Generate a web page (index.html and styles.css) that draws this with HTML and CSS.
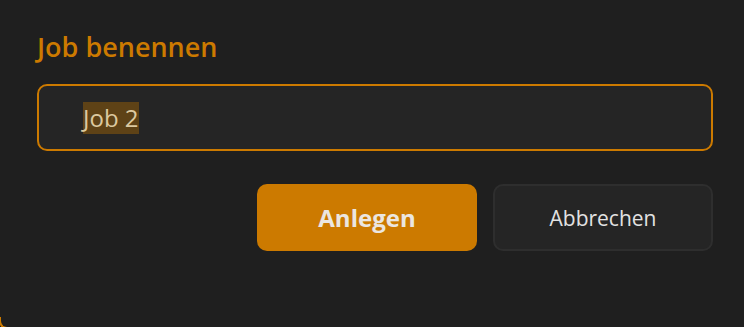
FILE: index.html
```html
<!DOCTYPE html>
<html lang="de">
<head>
    <meta charset="UTF-8">
    <meta name="viewport" content="width=device-width, initial-scale=1.0">
    <title>Job benennen</title>
    <link rel="stylesheet" href="styles.css">
</head>
<body>
    <!-- Rename dialog -->
    <div class="dialog">
        <h1 class="title">Job benennen</h1>
        <div class="field">
            <span class="value">Job 2</span>
        </div>
        <div class="actions">
            <button class="btn primary">Anlegen</button>
            <button class="btn secondary">Abbrechen</button>
        </div>
    </div>
</body>
</html>
```

FILE: styles.css
```css
/* Dark dialog */
body {
    margin: 0;
    background-color: #1f1f1f;
    font-family: "Open Sans", "Noto Sans", sans-serif;
    overflow: hidden;
}

.dialog {
    position: relative;
    height: 327px;
    padding: 29px 31px 0 37px;
    box-sizing: border-box;
}

/* clipped window corner */
.dialog::after {
    content: "";
    position: absolute;
    left: -1px;
    bottom: -2px;
    width: 10px;
    height: 10px;
    border-left: 2px solid #cc7a00;
    border-bottom: 2px solid #cc7a00;
    border-bottom-left-radius: 8px;
}

.title {
    margin: 0;
    font-size: 27px;
    font-weight: 600;
    line-height: 36px;
    color: #cc7a00;
}

.field {
    margin-top: 19px;
    height: 67px;
    box-sizing: border-box;
    border: 2px solid #cc7a00;
    border-radius: 10px;
    background: #252525;
    display: flex;
    align-items: center;
    padding-left: 44px;
}

.value {
    background: #5e4216;
    color: #dcc9a0;
    font-size: 24px;
    line-height: 32px;
}

.actions {
    display: flex;
    justify-content: flex-end;
    gap: 16px;
    margin-top: 33px;
}

.btn {
    width: 220px;
    height: 67px;
    border-radius: 10px;
    font-family: inherit;
    cursor: pointer;
}

.primary {
    background: #cc7a00;
    border: none;
    color: #ebe6e0;
    font-size: 24px;
    font-weight: 700;
}

.secondary {
    background: #252525;
    border: 2px solid #2e2e2e;
    color: #e2e2e2;
    font-size: 21px;
}
```
